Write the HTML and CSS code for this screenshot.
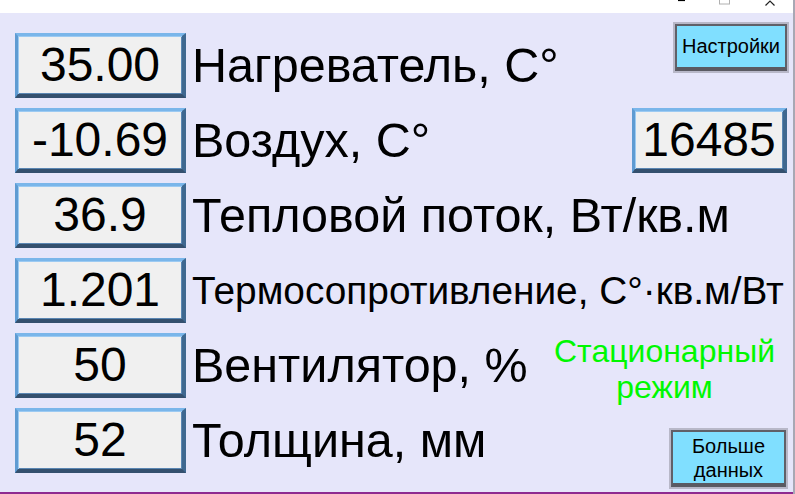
FILE: index.html
```html
<!DOCTYPE html>
<html lang="ru">
<head>
<meta charset="utf-8">
<title>Измеритель</title>
<link rel="stylesheet" href="styles.css">
</head>
<body>
<div class="window">
  <div class="titlebar">
    <svg class="caption" width="115" height="13" viewBox="0 0 115 13">
      <line x1="0" y1="0.5" x2="7" y2="0.5" stroke="#000" stroke-width="1.2"/>
      <rect x="41.5" y="-3" width="10" height="7" fill="none" stroke="#b0b0b0" stroke-width="1"/>
      <polyline points="87.5,5.5 92,1 96.5,5.5" fill="none" stroke="#222" stroke-width="1.2"/>
    </svg>
  </div>
  <main class="panel">
    <div class="row">
      <div class="value">35.00</div>
      <div class="label">Нагреватель, С°</div>
      <button class="btn btn-settings">Настройки</button>
    </div>
    <div class="row">
      <div class="value">-10.69</div>
      <div class="label">Воздух, С°</div>
      <div class="value value-counter">16485</div>
    </div>
    <div class="row">
      <div class="value">36.9</div>
      <div class="label">Тепловой поток, Вт/кв.м</div>
    </div>
    <div class="row">
      <div class="value">1.201</div>
      <div class="label label-small">Термосопротивление, С°·кв.м/Вт</div>
    </div>
    <div class="row">
      <div class="value">50</div>
      <div class="label">Вентилятор, %</div>
      <div class="status">Стационарный<br>режим</div>
    </div>
    <div class="row">
      <div class="value">52</div>
      <div class="label">Толщина, мм</div>
      <button class="btn btn-more">Больше<br>данных</button>
    </div>
  </main>
</div>
</body>
</html>
```
FILE: styles.css
```css
* { box-sizing: border-box; }
html, body {
  margin: 0;
  padding: 0;
  width: 795px;
  height: 494px;
  overflow: hidden;
  background: #ffffff;
  font-family: "Liberation Sans", Arial, sans-serif;
}
.window {
  width: 795px;
  height: 494px;
  display: flex;
  flex-direction: column;
  border-right: 2px solid #a8a8b4;
}
.titlebar {
  height: 13px;
  background: #ffffff;
  display: flex;
  justify-content: flex-end;
}
.caption { display: block; }
.panel {
  flex: 1;
  background: #e6e6fa;
  border-bottom: 2px solid #8e2a90;
  padding: 20px 0 0 15px;
  display: flex;
  flex-direction: column;
  gap: 10px;
}
.row {
  height: 65px;
  display: flex;
  align-items: center;
}
.value {
  width: 171px;
  height: 65px;
  flex: none;
  background: #f0f0f0;
  border-style: solid;
  border-width: 3px 4px 4px 3px;
  border-color: #7ab6ea #3f6890 #34506e #5f9bd2;
  box-shadow: inset 1px 1px 0 #9ccaf2, inset -1px -1px 0 #5a86b2;
  font-size: 48px;
  line-height: 57px;
  text-align: center;
  color: #000;
}
.label {
  margin-left: 6px;
  font-size: 48.5px;
  line-height: 57px;
  white-space: nowrap;
  color: #000;
}
.label-small { font-size: 38.8px; }
.value-counter {
  width: 155px;
  margin-left: auto;
  margin-right: 6px;
}
.btn {
  margin-left: auto;
  font-family: "Liberation Sans", Arial, sans-serif;
  color: #000;
  background: #80dfff;
  border-style: solid;
  border-width: 2px 2px 4px 2px;
  border-color: #606068 #606068 #5a5a62 #606068;
  box-shadow: 0 0 0 2px #b8b8c8;
  padding: 0;
  cursor: pointer;
}
.btn-settings {
  align-self: flex-start;
  margin-top: -9px;
  margin-right: 6px;
  width: 112px;
  height: 47px;
  font-size: 20px;
}
.btn-more {
  align-self: flex-start;
  margin-top: 22px;
  margin-right: 7px;
  width: 115px;
  height: 57px;
  font-size: 20px;
  line-height: 24px;
}
.status {
  margin-left: auto;
  margin-right: 18px;
  align-self: flex-start;
  margin-top: 0;
  color: #00f800;
  font-size: 32px;
  line-height: 36px;
  text-align: center;
}
```
